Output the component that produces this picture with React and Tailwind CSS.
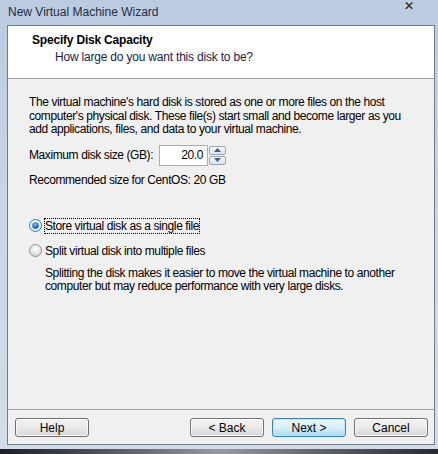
import React from 'react';

const Radio = ({ checked }) => (
  <svg width="13" height="13" viewBox="0 0 13 13" className="shrink-0">
    <defs>
      <radialGradient id={checked ? 'rOn' : 'rOff'} cx="50%" cy="35%" r="70%">
        <stop offset="0%" stopColor="#ffffff" />
        <stop offset="100%" stopColor={checked ? '#d6e6f4' : '#d0d0d0'} />
      </radialGradient>
      <radialGradient id="dot" cx="45%" cy="35%" r="65%">
        <stop offset="0%" stopColor="#8ad0ff" />
        <stop offset="60%" stopColor="#1a78c8" />
        <stop offset="100%" stopColor="#0d4a86" />
      </radialGradient>
    </defs>
    <circle cx="6.5" cy="6.5" r="6" fill={`url(#${checked ? 'rOn' : 'rOff'})`} stroke={checked ? '#3c7fb1' : '#8e8f8f'} strokeWidth="1" />
    {checked && <circle cx="6.5" cy="6.5" r="3.2" fill="url(#dot)" />}
  </svg>
);

const Button = ({ children, isDefault }) => (
  <div
    className={
      'flex h-[19px] w-[74px] items-center justify-center rounded-[3px] border text-[12px] leading-none text-black ' +
      (isDefault
        ? 'border-[#3c7fb1] bg-gradient-to-b from-[#eaf6fd] via-[#d9f0fc] to-[#a7d9f5] shadow-[inset_0_0_0_1px_#c4e5f6]'
        : 'border-[#707070] bg-gradient-to-b from-[#f2f2f2] via-[#ebebeb] to-[#d6d6d6] shadow-[inset_0_0_0_1px_#fbfbfb]')
    }
  >
    {children}
  </div>
);

const App = () => {
  return (
    <div className="flex h-[454px] w-[438px] flex-col overflow-hidden bg-[#3a3a3a] font-['Liberation_Sans',sans-serif] text-[12px] tracking-[-0.4px] text-black">
      {/* window frame */}
      <div className="flex h-[449px] flex-col bg-gradient-to-b from-[#bccbe0] via-[#c9d6e6] to-[#d3dde9] pb-[4px] pl-[7px] pr-[3px]">
        {/* title bar */}
        <div className="flex h-[25px] shrink-0 items-start justify-between">
          <span className="pl-[1px] pt-[3px] text-[12px] tracking-normal text-[#1e2d40]">New Virtual Machine Wizard</span>
          <span className="pr-[21px] text-[12px] font-bold leading-[13px] text-[#3a3a3a] [text-shadow:0_0_2px_#fff]">✕</span>
        </div>

        {/* client area */}
        <div className="flex flex-1 flex-col border border-[#6f7c8c] bg-[#f0f0f0]">
          {/* header */}
          <div className="flex h-[53px] shrink-0 flex-col border-b border-[#a0a0a0] bg-white pl-[24px] pt-[7px]">
            <div className="text-[12px] font-bold leading-[15px] tracking-[-0.2px]">Specify Disk Capacity</div>
            <div className="pl-[23px] pt-[2px] text-[12px] leading-[15px] tracking-[-0.2px] text-[#1b1b4a]">How large do you want this disk to be?</div>
          </div>

          {/* body */}
          <div className="flex flex-1 flex-col pl-[21px] pt-[17px]">
            <p className="text-[12px] leading-[13.5px]">
              The virtual machine's hard disk is stored as one or more files on the host
              <br />
              computer's physical disk. These file(s) start small and become larger as you
              <br />
              add applications, files, and data to your virtual machine.
            </p>

            <div className="mt-[8px] flex h-[21px] items-center">
              <span className="w-[130px] whitespace-nowrap">Maximum disk size (GB):</span>
              <div className="flex h-[21px] w-[49px] items-center justify-end border border-[#abadb3] bg-white pr-[4px]">
                20.0
              </div>
              <div className="flex h-[21px] w-[18px] flex-col gap-[1px] py-[1px] pl-[1px]">
                <div className="flex flex-1 items-center justify-center rounded-[2px] border border-[#9aa6b4] bg-gradient-to-b from-[#f4f6f8] to-[#dde3ea]">
                  <svg width="7" height="4" viewBox="0 0 7 4"><path d="M0 4 L3.5 0 L7 4 Z" fill="#3d5f86" /></svg>
                </div>
                <div className="flex flex-1 items-center justify-center rounded-[2px] border border-[#9aa6b4] bg-gradient-to-b from-[#f4f6f8] to-[#dde3ea]">
                  <svg width="7" height="4" viewBox="0 0 7 4"><path d="M0 0 L7 0 L3.5 4 Z" fill="#3d5f86" /></svg>
                </div>
              </div>
            </div>

            <div className="mt-[7px] leading-[14px]">Recommended size for CentOS: 20 GB</div>

            <div className="mt-[31px] flex items-center gap-[2px]">
              <Radio checked />
              <span className="border border-dotted border-black leading-[14px]">Store virtual disk as a single file</span>
            </div>

            <div className="mt-[10px] flex items-center gap-[3px]">
              <Radio />
              <span className="leading-[14px]">Split virtual disk into multiple files</span>
            </div>

            <p className="mt-[9px] pl-[16px] leading-[13.5px]">
              Splitting the disk makes it easier to move the virtual machine to another
              <br />
              computer but may reduce performance with very large disks.
            </p>
          </div>

          {/* footer */}
          <div className="flex h-[35px] shrink-0 items-start border-t border-[#a0a0a0] pl-[7px] pr-[6px] pt-[8px] tracking-normal">
            <Button>Help</Button>
            <div className="flex-1" />
            <div className="flex gap-[8px]">
              <Button>&lt; Back</Button>
              <Button isDefault>Next &gt;</Button>
              <Button>Cancel</Button>
            </div>
          </div>
        </div>
      </div>
      <div className="h-[5px] bg-gradient-to-r from-[#1e1e1e] via-[#9a9a9a] to-[#2a2a2a]" />
    </div>
  );
};

export default App;
